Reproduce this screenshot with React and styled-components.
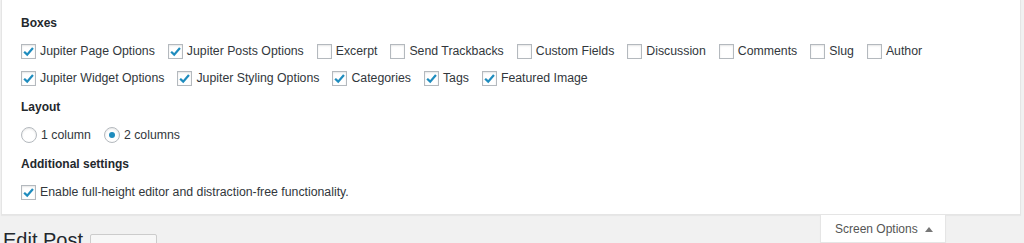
import React from 'react';
import styled, { createGlobalStyle } from 'styled-components';

const Global = createGlobalStyle`
  body {
    margin: 0;
    background: #f1f1f1;
    font-family: 'Liberation Sans', Arial, sans-serif;
    color: #23282d;
    overflow: hidden;
  }
`

const Panel = styled.div`
  margin: 0 3px 0 1px;
  background: #fff;
  border: 1px solid #e5e5e5;
  border-top: none;
  box-shadow: 0 1px 1px rgba(0,0,0,.04);
  padding: 15px 19px 14px;
`

const Section = styled.fieldset`
  border: none;
  margin: ${p => (p.first ? '0' : '13px 0 0')};
  padding: 0;
`

const Legend = styled.div`
  font-size: 12px;
  font-weight: bold;
  line-height: 16px;
  margin-bottom: 12px;
`

const Options = styled.div`
  display: flex;
  flex-wrap: wrap;
  column-gap: 13px;
  row-gap: 11px;
  width: ${p => p.width || 'auto'};
`

const Item = styled.label`
  display: flex;
  align-items: center;
  gap: 4px;
  height: 16px;
  font-size: 12.3px;
  line-height: 16px;
  color: #32373c;
`

const Box = styled.span`
  box-sizing: border-box;
  width: 15px;
  height: 15px;
  border: 1px solid #b4b9be;
  background: #fff;
  box-shadow: inset 0 1px 2px rgba(0,0,0,.1);
  display: flex;
  align-items: center;
  justify-content: center;
`

const Radio = styled(Box)`
  width: 16px;
  height: 16px;
  border-radius: 50%;
  &::after {
    content: '';
    display: ${p => (p.checked ? 'block' : 'none')};
    width: 6px;
    height: 6px;
    border-radius: 50%;
    background: #1e8cbe;
  }
`

const Bottom = styled.div`
  display: flex;
  justify-content: space-between;
  align-items: flex-start;
  margin-right: 78px;
`

const Title = styled.div`
  display: flex;
  align-items: flex-start;
  gap: 7px;
  margin: 11px 0 0 3px;
`

const H1 = styled.h1`
  margin: 0;
  font-size: 20px;
  font-weight: normal;
  line-height: 29px;
  color: #23282d;
`

const AddNew = styled.span`
  margin-top: 8px;
  border: 1px solid #ccc;
  border-radius: 2px;
  background: #f7f7f7;
  color: #0073aa;
  font-size: 12px;
  line-height: 26px;
  padding: 0 8px;
`

const Tab = styled.div`
  box-sizing: border-box;
  width: 126px;
  height: 28px;
  background: #fff;
  border: 1px solid #e5e5e5;
  border-top: none;
  box-shadow: 0 1px 1px rgba(0,0,0,.04);
  font-size: 12px;
  color: #555;
  display: flex;
  align-items: center;
  padding-left: 14px;
  gap: 7px;
`

const Check = () => (
  <svg width="13" height="13" viewBox="0 0 14 14">
    <path d="M2.3 7.2 L5.6 10.4 L11.8 3.2" fill="none" stroke="#1e8cbe" strokeWidth="2.4" />
  </svg>
)

const Checkbox = ({ label, checked }) => (
  <Item>
    <Box>{checked && <Check />}</Box>
    {label}
  </Item>
)

const boxes = [
  ['Jupiter Page Options', true],
  ['Jupiter Posts Options', true],
  ['Excerpt', false],
  ['Send Trackbacks', false],
  ['Custom Fields', false],
  ['Discussion', false],
  ['Comments', false],
  ['Slug', false],
  ['Author', false],
  ['Jupiter Widget Options', true],
  ['Jupiter Styling Options', true],
  ['Categories', true],
  ['Tags', true],
  ['Featured Image', true],
]

const App = () => {
  return (
    <>
      <Global />
      <Panel>
        <Section first>
          <Legend>Boxes</Legend>
          <Options width="930px">
            {boxes.map(([l, c]) => <Checkbox key={l} label={l} checked={c} />)}
          </Options>
        </Section>
        <Section>
          <Legend>Layout</Legend>
          <Options>
            <Item><Radio />1 column</Item>
            <Item><Radio checked />2 columns</Item>
          </Options>
        </Section>
        <Section>
          <Legend>Additional settings</Legend>
          <Options>
            <Checkbox label="Enable full-height editor and distraction-free functionality." checked />
          </Options>
        </Section>
      </Panel>
      <Bottom>
        <Title>
          <H1>Edit Post</H1>
          <AddNew>Add New</AddNew>
        </Title>
        <Tab>
          Screen Options
          <svg width="8" height="6" viewBox="0 0 8 6"><path d="M0 6 L4 1 L8 6 Z" fill="#777" /></svg>
        </Tab>
      </Bottom>
    </>
  );
};

export default App;
